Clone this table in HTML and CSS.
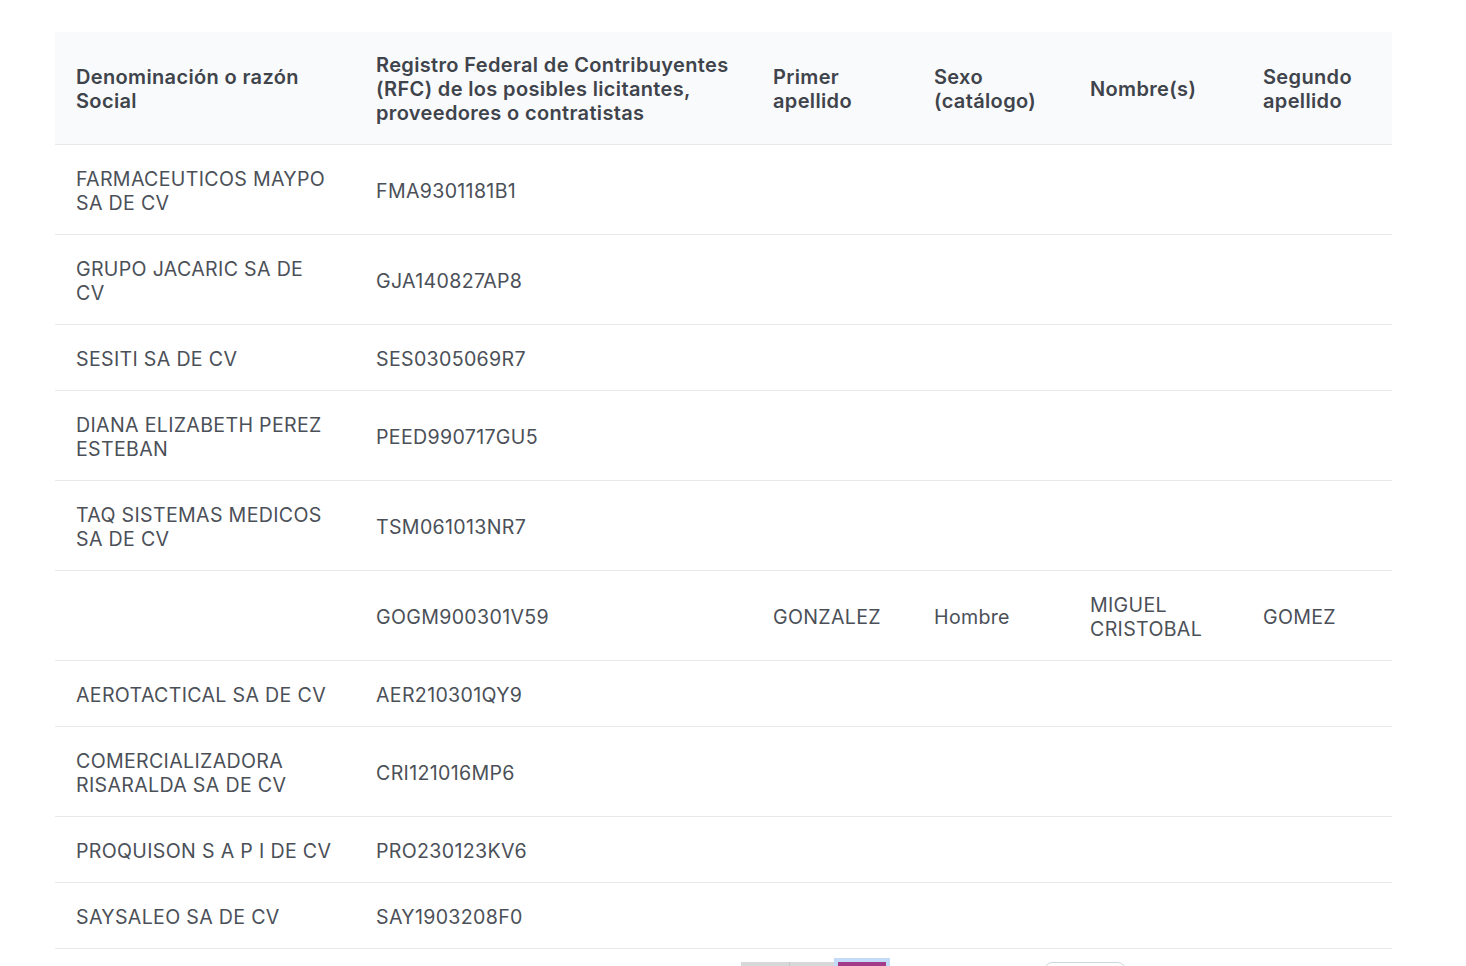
FILE: index.html
```html
<!DOCTYPE html>
<html lang="es">
<head>
<meta charset="utf-8">
<title>Licitantes</title>
<link rel="stylesheet" href="styles.css">
</head>
<body>
<div class="page">
  <table class="grid">
    <colgroup>
      <col class="c1"><col class="c2"><col class="c3"><col class="c4"><col class="c5"><col class="c6">
    </colgroup>
    <thead>
      <tr>
        <th>Denominación o razón Social</th>
        <th>Registro Federal de Contribuyentes (RFC) de los posibles licitantes, proveedores o contratistas</th>
        <th>Primer apellido</th>
        <th>Sexo (catálogo)</th>
        <th>Nombre(s)</th>
        <th>Segundo apellido</th>
      </tr>
    </thead>
    <tbody>
      <tr><td>FARMACEUTICOS MAYPO SA DE CV</td><td>FMA9301181B1</td><td></td><td></td><td></td><td></td></tr>
      <tr><td>GRUPO JACARIC SA DE CV</td><td>GJA140827AP8</td><td></td><td></td><td></td><td></td></tr>
      <tr><td>SESITI SA DE CV</td><td>SES0305069R7</td><td></td><td></td><td></td><td></td></tr>
      <tr><td>DIANA ELIZABETH PEREZ ESTEBAN</td><td>PEED990717GU5</td><td></td><td></td><td></td><td></td></tr>
      <tr><td>TAQ SISTEMAS MEDICOS SA DE CV</td><td>TSM061013NR7</td><td></td><td></td><td></td><td></td></tr>
      <tr><td></td><td>GOGM900301V59</td><td>GONZALEZ</td><td>Hombre</td><td>MIGUEL CRISTOBAL</td><td>GOMEZ</td></tr>
      <tr><td>AEROTACTICAL SA DE CV</td><td>AER210301QY9</td><td></td><td></td><td></td><td></td></tr>
      <tr><td>COMERCIALIZADORA RISARALDA SA DE CV</td><td>CRI121016MP6</td><td></td><td></td><td></td><td></td></tr>
      <tr><td>PROQUISON S A P I DE CV</td><td>PRO230123KV6</td><td></td><td></td><td></td><td></td></tr>
      <tr><td>SAYSALEO SA DE CV</td><td>SAY1903208F0</td><td></td><td></td><td></td><td></td></tr>
    </tbody>
  </table>
  <div class="footer">
    <div class="pager">
      <span class="pg"></span><span class="pg pg-narrow"></span><span class="pg-active"><span class="pg-fill"></span></span>
    </div>
    <div class="select"></div>
  </div>
</div>
</body>
</html>
```
FILE: styles.css
```css
html, body {
  margin: 0;
  padding: 0;
  background: #ffffff;
}
body {
  font-family: Inter, "Liberation Sans", sans-serif;
  color: #4b5058;
}
.page {
  padding: 32px 74px 0 55px;
}
.grid {
  width: 1337px;
  border-collapse: collapse;
  table-layout: fixed;
}
.c1 { width: 300px; }
.c2 { width: 397px; }
.c3 { width: 161px; }
.c4 { width: 156px; }
.c5 { width: 173px; }
.c6 { width: 150px; }
.grid thead th {
  background: #f9fafb;
  text-align: left;
  font-weight: 600;
  font-size: 20px;
  line-height: 24px;
  letter-spacing: 0.35px;
  color: #3f444c;
  padding: 21px 21px 19px;
  border-bottom: 1px solid #e7e9ed;
  vertical-align: middle;
}
.grid tbody td {
  font-size: 19.6px;
  line-height: 24px;
  font-weight: 400;
  color: #4b5058;
  padding: 22px 21px 19px;
  border-bottom: 1px solid #e7e9ed;
  vertical-align: middle;
  letter-spacing: 0.32px;
}
.footer {
  display: flex;
  align-items: flex-start;
  margin-top: 9px;
  padding-left: 686px;
}
.pager {
  display: flex;
  align-items: flex-start;
}
.pg {
  width: 48px;
  height: 40px;
  margin-top: 4px;
  background: #d7d8da;
  border-right: 1px solid #c6c7c9;
}
.pg-narrow {
  width: 44px;
  border-right: 0;
}
.pg-active {
  width: 48px;
  height: 40px;
  padding: 4px 4px 0;
  background: #c4dbf8;
}
.pg-fill {
  display: block;
  height: 40px;
  background: #a13b8a;
}
.select {
  width: 82px;
  height: 40px;
  margin-top: 4px;
  margin-left: 153px;
  border: 1px solid #d1d5db;
  border-radius: 10px;
}
```
